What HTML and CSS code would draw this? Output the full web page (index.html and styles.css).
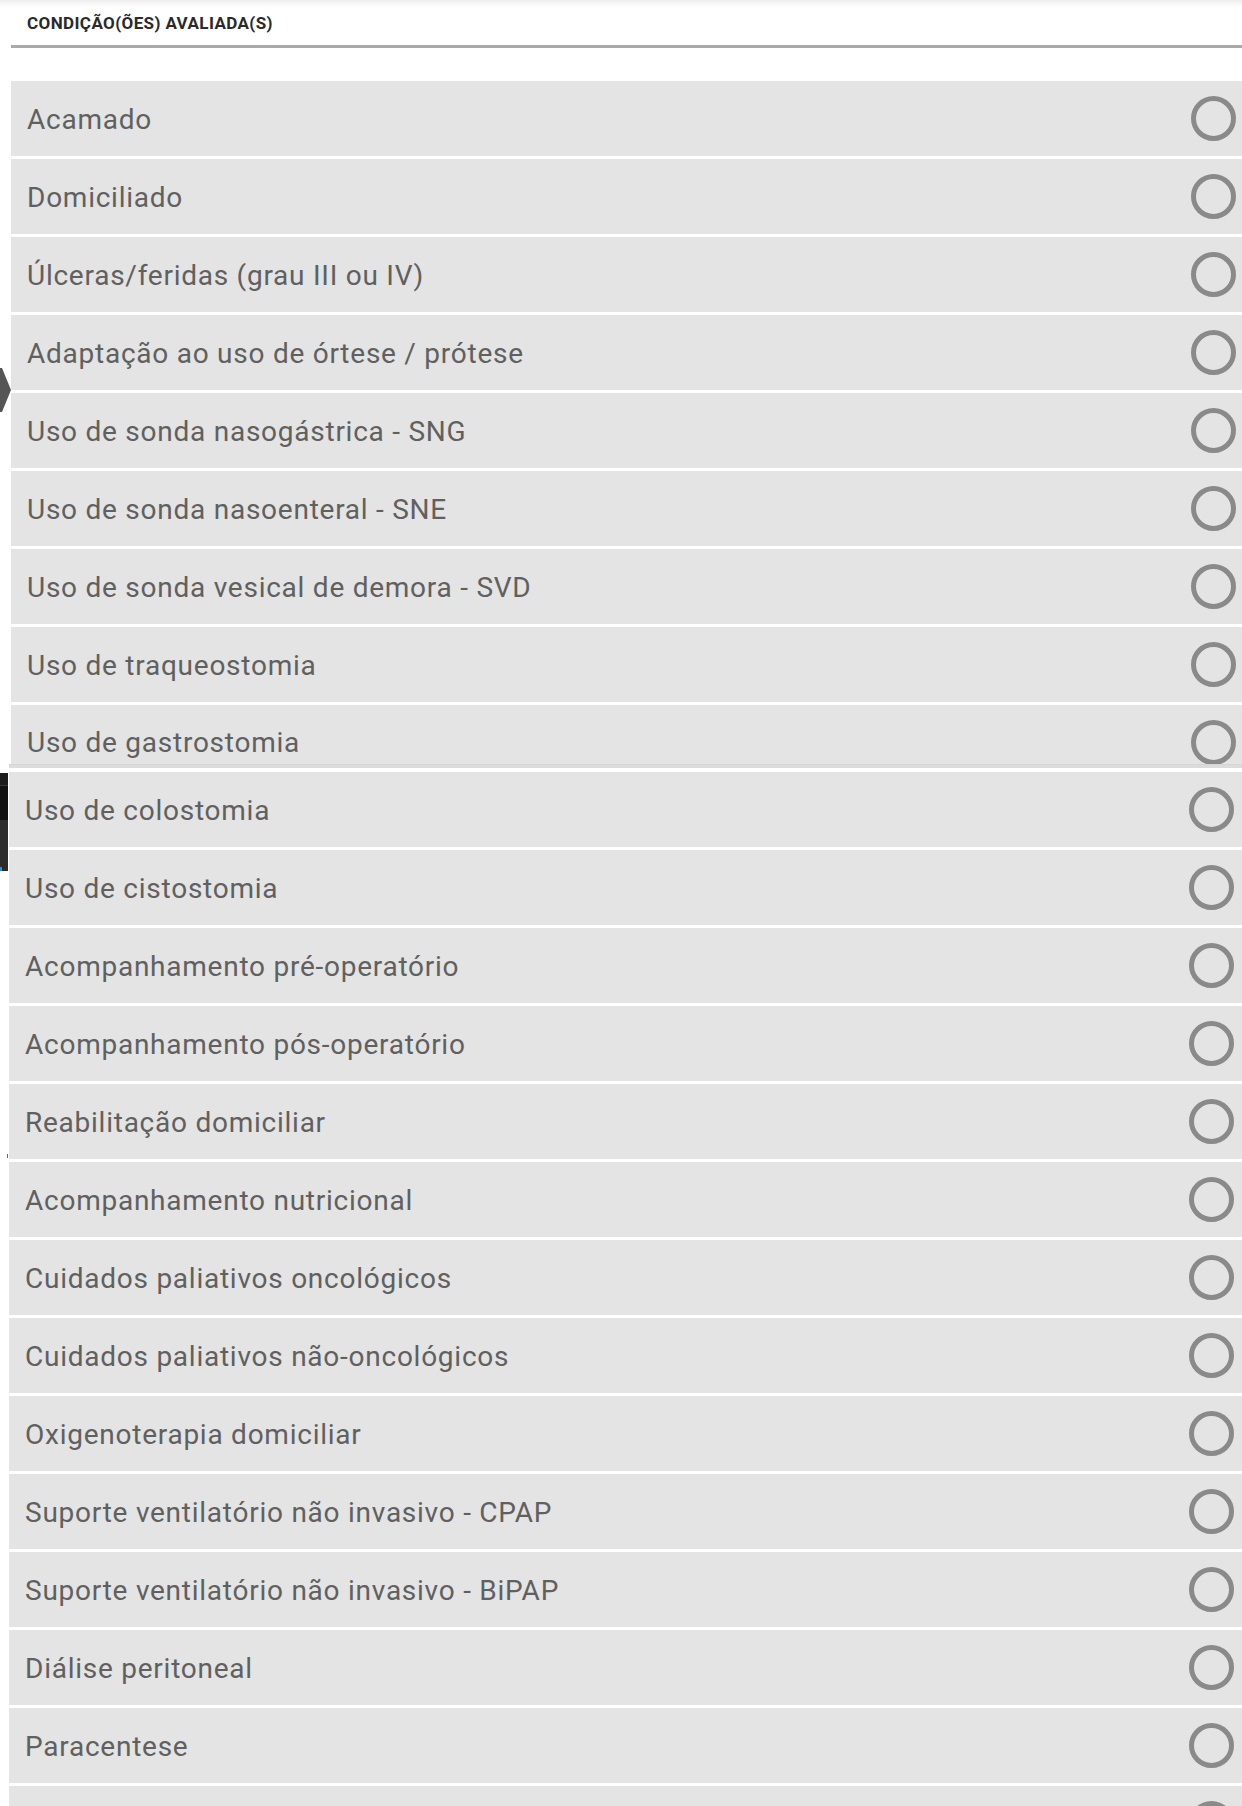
FILE: index.html
```html
<!DOCTYPE html>
<html lang="pt-BR">
<head>
<meta charset="utf-8">
<title>Condição(ões) avaliada(s)</title>
<link rel="stylesheet" href="styles.css">
</head>
<body>
<div class="page">
  <section class="upper">
    <header class="header">CONDIÇÃO(ÕES) AVALIADA(S)</header>
    <div class="divider"></div>
    <ul class="list">
      <li class="row"><span>Acamado</span><span class="radio"></span></li>
      <li class="row"><span>Domiciliado</span><span class="radio"></span></li>
      <li class="row"><span>Úlceras/feridas (grau III ou IV)</span><span class="radio"></span></li>
      <li class="row"><span>Adaptação ao uso de órtese / prótese</span><span class="radio"></span></li>
      <li class="row"><span>Uso de sonda nasogástrica - SNG</span><span class="radio"></span></li>
      <li class="row"><span>Uso de sonda nasoenteral - SNE</span><span class="radio"></span></li>
      <li class="row"><span>Uso de sonda vesical de demora - SVD</span><span class="radio"></span></li>
      <li class="row"><span>Uso de traqueostomia</span><span class="radio"></span></li>
      <li class="row clipped"><div class="row-inner"><span>Uso de gastrostomia</span><span class="radio"></span></div></li>
    </ul>
  </section>
  <section class="lower">
    <div class="strip"></div>
    <ul class="list">
      <li class="row"><span>Uso de colostomia</span><span class="radio"></span></li>
      <li class="row"><span>Uso de cistostomia</span><span class="radio"></span></li>
      <li class="row"><span>Acompanhamento pré-operatório</span><span class="radio"></span></li>
      <li class="row"><span>Acompanhamento pós-operatório</span><span class="radio"></span></li>
      <li class="row"><span>Reabilitação domiciliar</span><span class="radio"></span></li>
      <li class="row"><span>Acompanhamento nutricional</span><span class="radio"></span></li>
      <li class="row"><span>Cuidados paliativos oncológicos</span><span class="radio"></span></li>
      <li class="row"><span>Cuidados paliativos não-oncológicos</span><span class="radio"></span></li>
      <li class="row"><span>Oxigenoterapia domiciliar</span><span class="radio"></span></li>
      <li class="row"><span>Suporte ventilatório não invasivo - CPAP</span><span class="radio"></span></li>
      <li class="row"><span>Suporte ventilatório não invasivo - BiPAP</span><span class="radio"></span></li>
      <li class="row"><span>Diálise peritoneal</span><span class="radio"></span></li>
      <li class="row"><span>Paracentese</span><span class="radio"></span></li>
      <li class="row"><span></span><span class="radio"></span></li>
    </ul>
  </section>
  <svg class="chevron" width="12" height="46" viewBox="0 0 12 46" aria-hidden="true">
    <polygon points="0,1 2,1 11,23 2,45 0,45" fill="#555555"/>
  </svg>
  <div class="dark-edge"></div>
  <div class="tick"></div>
</div>
</body>
</html>
```

FILE: styles.css
```css
html, body {
  margin: 0;
  padding: 0;
  background: #ffffff;
}

body {
  font-family: Roboto, "Liberation Sans", Arial, sans-serif;
  overflow: hidden;
}

.page {
  position: relative;
  background: linear-gradient(to bottom, #ededed 0, #f8f8f8 4px, #ffffff 8px) no-repeat;
  background-size: 100% 8px;
}

.upper {
  padding-left: 11px;
}

.header {
  height: 45px;
  display: flex;
  align-items: center;
  padding-left: 16px;
  padding-top: 1px;
  box-sizing: border-box;
  font-size: 17px;
  font-weight: 700;
  color: #2a2a2a;
  letter-spacing: 0.4px;
}

.divider {
  height: 3px;
  background: #a9a9a9;
  margin-bottom: 33px;
}

.list {
  list-style: none;
  margin: 0;
  padding: 0;
  display: flex;
  flex-direction: column;
  gap: 3px;
}

.row {
  height: 75px;
  box-sizing: border-box;
  background: #e4e4e4;
  display: flex;
  align-items: center;
  justify-content: space-between;
  padding-left: 16px;
  padding-right: 6px;
  font-size: 28px;
  letter-spacing: 0.75px;
  color: #606060;
}

.row span:first-child {
  padding-top: 2px;
}

.radio {
  width: 45px;
  height: 45px;
  box-sizing: border-box;
  border: 5px solid #8a8a8a;
  border-radius: 50%;
  flex: none;
}

.row.clipped {
  height: 59px;
  overflow: hidden;
  align-items: flex-start;
  padding: 0;
}

.row-inner {
  height: 75px;
  flex: 1;
  display: flex;
  align-items: center;
  justify-content: space-between;
  padding-left: 16px;
  padding-right: 6px;
  box-sizing: border-box;
}

.row-inner span:first-child {
  margin-top: -3px;
}

.lower {
  padding-left: 9px;
}

.lower .row {
  padding-right: 8px;
}

.strip {
  height: 4px;
  background: #dcdcdc;
  border-top: 1px solid #d6d6d6;
  box-sizing: border-box;
  margin-bottom: 4px;
}

.chevron {
  position: absolute;
  left: 0;
  top: 367px;
}

.dark-edge {
  position: absolute;
  left: 0;
  top: 773px;
  width: 8px;
  height: 98px;
  background: linear-gradient(to bottom,
    #1d1d1d 0, #1d1d1d 12px,
    #3a3a3a 12px, #3a3a3a 13px,
    #121212 13px, #121212 47px,
    #2c2c2c 47px, #2c2c2c 100%);
}

.dark-edge::after {
  content: "";
  position: absolute;
  left: 0;
  bottom: 0;
  width: 2px;
  height: 4px;
  background: #2f8ee0;
}

.tick {
  position: absolute;
  left: 7px;
  top: 1154px;
  width: 1px;
  height: 4px;
  background: #666666;
}
```
